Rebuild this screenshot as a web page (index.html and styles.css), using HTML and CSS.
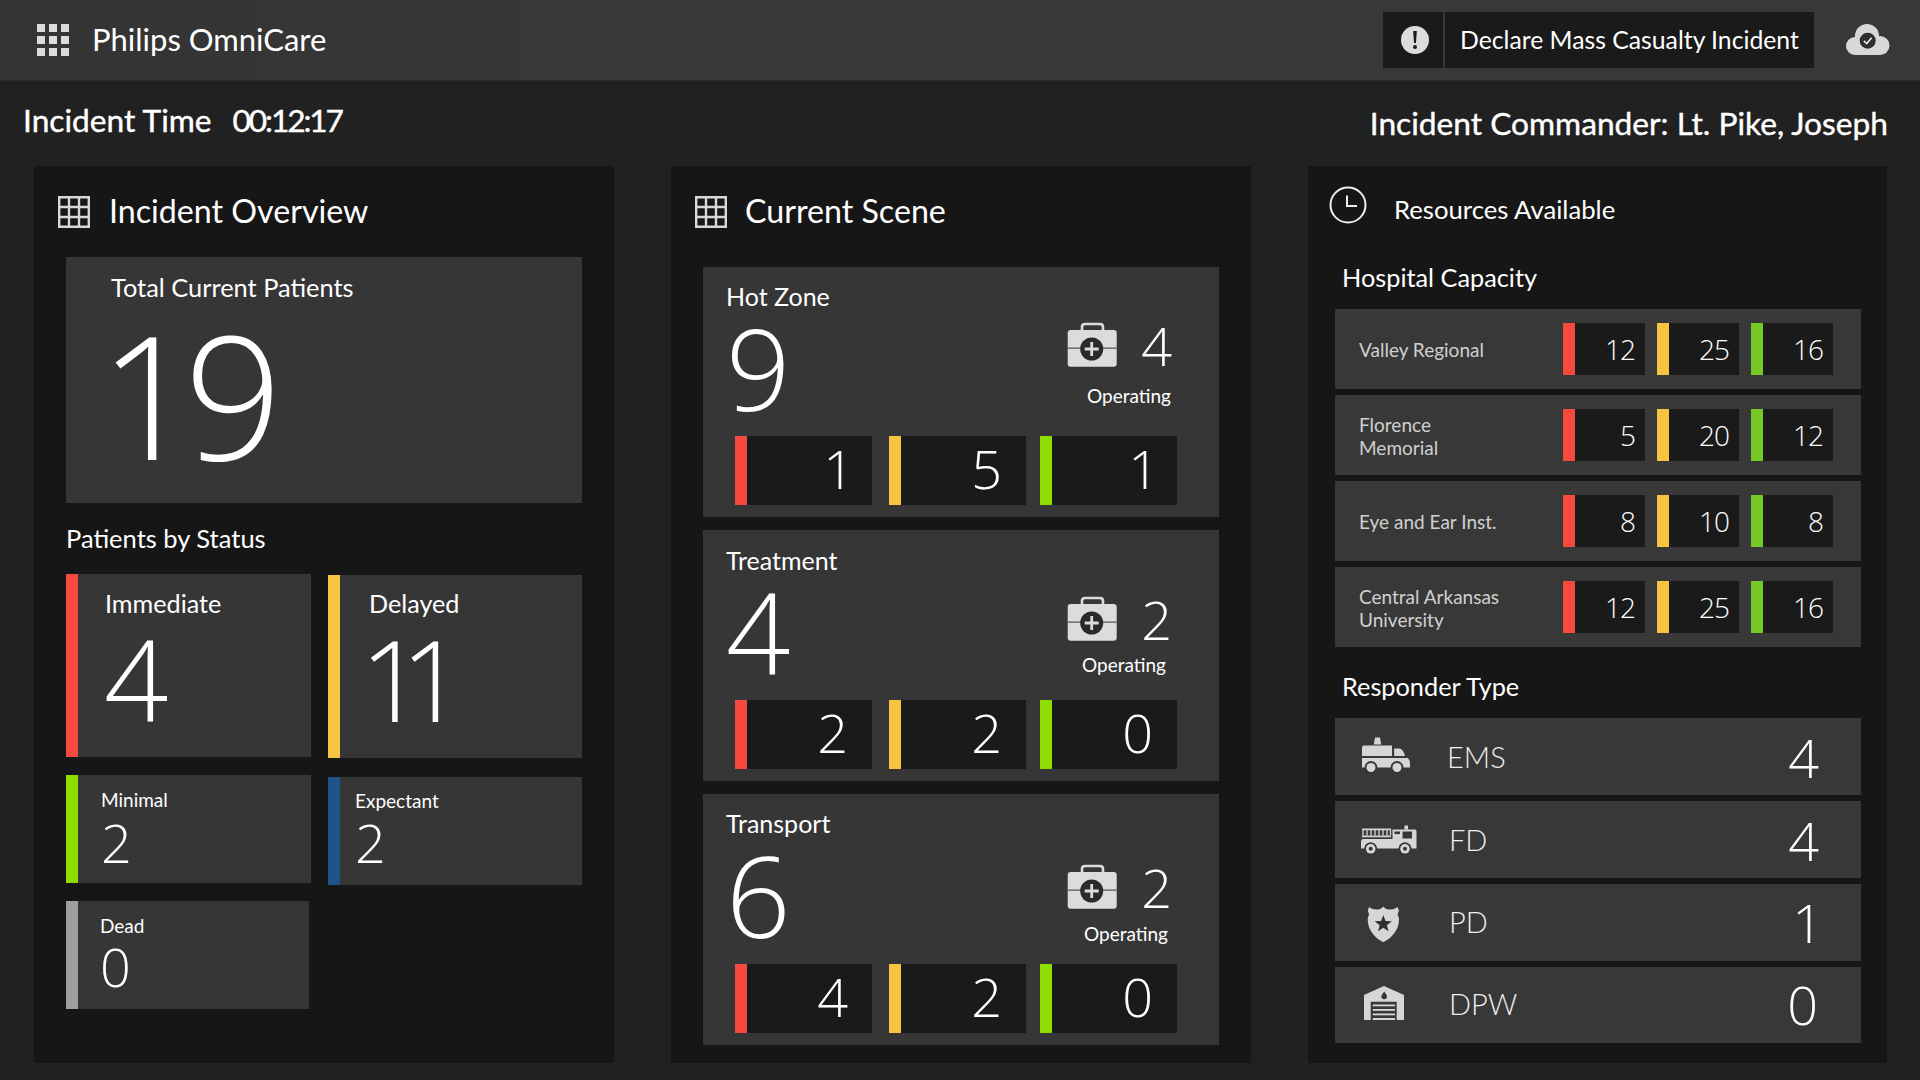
FILE: index.html
```html
<!doctype html>
<html lang='en-US'>
  <head>
    <title>Philips OmniCare</title>
    <meta charset='UTF-8'>
    <link rel="stylesheet" href="styles.css">
  </head>
  <body>
<svg class=defs width=0 height=0>
  <symbol id=i-grid viewBox="0 0 32 32">
    <path d="M1.2 1.2H30.8V30.8H1.2ZM11 1.2V30.8M21 1.2V30.8M1.2 11H30.8M1.2 21H30.8" fill=none stroke=#d8d8d8 stroke-width=2.4 />
  </symbol>
  <symbol id=i-kit viewBox="0 0 65 60">
    <path d="M22 15V12Q22 9 25 9H40Q43 9 43 12V15" fill=none stroke=#dcdcdc stroke-width=2.6 />
    <rect x=7.7 y=15 width=49 height=36.7 rx=3 fill=#dcdcdc />
    <rect x=7.7 y=32.6 width=49 height=1 fill=#363636 />
    <circle cx=31.7 cy=34 r=11.5 fill=#2a2a2a />
    <path d="M31.7 27V41M24.7 34H38.7" stroke=#dcdcdc stroke-width=2.8 />
  </symbol>
</svg>

<header class=topbar>
  <svg class=apps width=32 height=32 viewBox="0 0 32 32" fill=#dcdcdc>
    <rect width=8 height=8 /><rect x=12 width=8 height=8 /><rect x=24 width=8 height=8 />
    <rect y=12 width=8 height=8 /><rect x=12 y=12 width=8 height=8 /><rect x=24 y=12 width=8 height=8 />
    <rect y=24 width=8 height=8 /><rect x=12 y=24 width=8 height=8 /><rect x=24 y=24 width=8 height=8 />
  </svg>
  <div class=brand>Philips OmniCare</div>
  <div class=alert-icon>
    <svg width=28 height=28 viewBox="0 0 28 28">
      <circle cx=14 cy=14 r=14 fill=#dcdcdc />
      <path d="M12.2 5H15.8L15 17H13Z" fill=#1a1a1a />
      <circle cx=14 cy=21 r=2 fill=#1a1a1a />
    </svg>
  </div>
  <div class=declare>Declare Mass Casualty Incident</div>
  <svg class=cloud width=56 height=50 viewBox="0 0 56 50">
    <g fill=#d8d8d8>
      <circle cx=15 cy=31 r=9 /><circle cx=27 cy=21 r=12 /><circle cx=40 cy=30.5 r=9.5 />
      <rect x=15 y=27 width=26 height=13 />
    </g>
    <circle cx=27.7 cy=25.7 r=8 fill=#2e2e2e />
    <path d="M23.8 25.8L26.7 28.6L31.7 22.8" fill=none stroke=#e8e8e8 stroke-width=1.7 />
  </svg>
</header>

<div class=subbar>
  <div class=incident-time>Incident Time<span class=clock-value>00:12:17</span></div>
  <div class=commander>Incident Commander: Lt. Pike, Joseph</div>
</div>

<main class=columns>
  <!-- left column -->
  <section class=panel>
    <div class=panel-head>
      <svg class=head-icon><use href=#i-grid /></svg>
      <h2>Incident Overview</h2>
    </div>
    <div class=panel-body>
      <div class=total-card>
        <div class=total-label>Total Current Patients</div>
        <div class=total-value>19</div>
      </div>
      <h3 class=status-title>Patients by Status</h3>
      <div class=status-cols>
        <div class="status-col col-left">
          <div class="stat stat-big red">
            <div class=stat-label>Immediate</div>
            <div class=stat-value>4</div>
          </div>
          <div class="stat stat-small green">
            <div class=stat-label>Minimal</div>
            <div class=stat-value>2</div>
          </div>
          <div class="stat stat-small gray">
            <div class=stat-label>Dead</div>
            <div class=stat-value>0</div>
          </div>
        </div>
        <div class="status-col col-right">
          <div class="stat stat-big yellow">
            <div class=stat-label>Delayed</div>
            <div class=stat-value>11</div>
          </div>
          <div class="stat stat-small blue">
            <div class=stat-label>Expectant</div>
            <div class=stat-value>2</div>
          </div>
        </div>
      </div>
    </div>
  </section>

  <!-- middle column -->
  <section class=panel>
    <div class="panel-head head-scene">
      <svg class=head-icon><use href=#i-grid /></svg>
      <h2>Current Scene</h2>
    </div>
    <div class="panel-body scene-list">
      <div class="scene scene-hot">
        <div class=scene-title>Hot Zone</div>
        <div class=scene-main>
          <div class=scene-value>9</div>
          <div class=op-block>
            <div class=op-row><svg class=kit><use href=#i-kit /></svg><span class=op-value>4</span></div>
            <div class=op-label>Operating</div>
          </div>
        </div>
        <div class=chips>
          <div class="chip red"><span class=one>1</span></div>
          <div class="chip yellow"><span>5</span></div>
          <div class="chip lime"><span class=one>1</span></div>
        </div>
      </div>
      <div class="scene scene-treat">
        <div class=scene-title>Treatment</div>
        <div class=scene-main>
          <div class=scene-value>4</div>
          <div class=op-block>
            <div class=op-row><svg class=kit><use href=#i-kit /></svg><span class=op-value>2</span></div>
            <div class=op-label>Operating</div>
          </div>
        </div>
        <div class=chips>
          <div class="chip red"><span>2</span></div>
          <div class="chip yellow"><span>2</span></div>
          <div class="chip lime"><span>0</span></div>
        </div>
      </div>
      <div class="scene scene-trans">
        <div class=scene-title>Transport</div>
        <div class=scene-main>
          <div class=scene-value>6</div>
          <div class=op-block>
            <div class=op-row><svg class=kit><use href=#i-kit /></svg><span class=op-value>2</span></div>
            <div class=op-label>Operating</div>
          </div>
        </div>
        <div class=chips>
          <div class="chip red"><span>4</span></div>
          <div class="chip yellow"><span>2</span></div>
          <div class="chip lime"><span>0</span></div>
        </div>
      </div>
    </div>
  </section>

  <!-- right column -->
  <section class="panel panel-res">
    <div class="panel-head head-res">
      <svg class=clock-icon width=38 height=38 viewBox="0 0 38 38">
        <circle cx=19 cy=19 r=17.5 fill=none stroke=#eee stroke-width=2 />
        <path d="M18 9.5V20H28" fill=none stroke=#eee stroke-width=2 />
      </svg>
      <h2>Resources Available</h2>
    </div>
    <div class=panel-body>
      <h3 class=cap-title>Hospital Capacity</h3>
      <div class=rows>
        <div class=hosp-row>
          <div class=hosp-name>Valley Regional</div>
          <div class="mini red"><span>12</span></div><div class="mini yellow"><span>25</span></div><div class="mini leaf"><span>16</span></div>
        </div>
        <div class=hosp-row>
          <div class=hosp-name>Florence<br>Memorial</div>
          <div class="mini red"><span>5</span></div><div class="mini yellow"><span>20</span></div><div class="mini leaf"><span>12</span></div>
        </div>
        <div class=hosp-row>
          <div class=hosp-name>Eye and Ear Inst.</div>
          <div class="mini red"><span>8</span></div><div class="mini yellow"><span>10</span></div><div class="mini leaf"><span>8</span></div>
        </div>
        <div class=hosp-row>
          <div class=hosp-name>Central Arkansas<br>University</div>
          <div class="mini red"><span>12</span></div><div class="mini yellow"><span>25</span></div><div class="mini leaf"><span>16</span></div>
        </div>
      </div>
      <h3 class=resp-title>Responder Type</h3>
      <div class=rows>
        <div class=resp-row>
          <svg class=resp-icon viewBox="0 1.5 70 50" fill=#d6d6d6>
            <path d="M20 7H25L26.2 14H18.8Z" />
            <path d="M7 17Q7 15 9 15H37V25.5H7Z" />
            <path d="M39.2 18H44Q48 18 50 25.5H39.2Z" />
            <path d="M7 27.5H52.5Q55 29 55 33V37H7Z" />
            <circle cx=16 cy=37 r=6.5 fill=#363636 /><circle cx=16 cy=37 r=4.5 />
            <circle cx=42 cy=37 r=6.5 fill=#363636 /><circle cx=42 cy=37 r=4.5 />
          </svg>
          <div class=resp-name>EMS</div>
          <div class=resp-value>4</div>
        </div>
        <div class=resp-row>
          <svg class=resp-icon viewBox="0 -0.5 70 50" fill=#d6d6d6>
            <path d="M7 13H36V14.8H7ZM7 20H36V21.8H7Z" />
            <path d="M8 14V20M12 14V20M16 14V20M20 14V20M24 14V20M28 14V20M32 14V20M35.5 14V20" stroke=#d6d6d6 stroke-width=1.3 />
            <rect x=49.5 y=10 width=3.5 height=4 />
            <path d="M37.5 14H60Q61.5 14 61.5 16V33H6V27Q6 23.5 8 23.5H37.5Z" />
            <rect x=47.5 y=16 width=9.5 height=7 fill=#363636 />
            <rect x=39.5 y=16 width=5.5 height=2.6 fill=#363636 />
            <circle cx=15.7 cy=33.3 r=6.5 fill=#363636 /><circle cx=15.7 cy=33.3 r=4.8 /><circle cx=15.7 cy=33.3 r=2 fill=#363636 />
            <circle cx=50 cy=33.3 r=6.5 fill=#363636 /><circle cx=50 cy=33.3 r=4.8 /><circle cx=50 cy=33.3 r=2 fill=#363636 />
          </svg>
          <div class=resp-name>FD</div>
          <div class=resp-value>4</div>
        </div>
        <div class=resp-row>
          <svg class=resp-icon viewBox="0 -2.5 70 50" fill=#d6d6d6>
            <path d="M14 6.5L15.5 7.5Q20 10 25 8.5Q27 7.8 28.3 6Q29.6 7.8 31.6 8.5Q36.6 10 41 7.5L42.6 6.5L44 10.5Q42.6 12.5 42.6 14.5Q44 16 44 19C44 30 36 38 28.3 41.7C20.6 38 12.7 30 12.7 19Q12.7 16 14 14.5Q14 12.5 12.7 10.5Z" />
            <polygon points="28.3,14.5 30.5,20.4 36.9,20.7 31.9,24.7 33.6,30.8 28.3,27.3 23,30.8 24.7,24.7 19.7,20.7 26.1,20.4" fill=#2e2e2e />
          </svg>
          <div class=resp-name>PD</div>
          <div class=resp-value>1</div>
        </div>
        <div class=resp-row>
          <svg class=resp-icon viewBox="0 0 70 50" fill=#d6d6d6>
            <path d="M9 15L29 6L49 15V40H41.7V21.7H15.7V40H9Z" />
            <rect x=17.7 y=24.5 width=22.3 height=1.8 /><rect x=17.7 y=29 width=22.3 height=1.8 /><rect x=17.7 y=33.5 width=22.3 height=1.8 /><rect x=17.7 y=38 width=22.3 height=2 />
            <path d="M29.2 11.5Q32 15 32 16.5A2.8 2.8 0 0 1 26.4 16.5Q26.4 15 29.2 11.5Z" fill=#363636 />
          </svg>
          <div class=resp-name>DPW</div>
          <div class=resp-value>0</div>
        </div>
      </div>
    </div>
  </section>
</main>
  </body>
</html>
```

FILE: styles.css
```css
html, body {
  margin: 0;
  background: #212121;
  color: #fff;
  font-family: Lato, "Open Sans", sans-serif;
}
body {
  width: 1920px;
  height: 1080px;
  overflow: hidden;
}
h2, h3 {
  margin: 0;
  font-weight: 400;
}
.defs {
  display: block;
  height: 0;
}
/* all the big numbers */
.total-value, .stat-value, .scene-value, .op-value, .chip, .mini, .resp-value {
  font-family: "Open Sans", sans-serif;
  font-weight: 300;
}

/* top bar */
.topbar {
  height: 80px;
  display: flex;
  align-items: center;
  padding-left: 37px;
  background: linear-gradient(90deg, #333, #3a3a3a 40%, #383838);
  border-bottom: 1px solid #2a2a2a;
}
.brand {
  margin: -2px auto 0 23px;
  font-size: 31px;
}
.alert-icon {
  width: 60px;
  height: 56px;
  display: flex;
  align-items: center;
  justify-content: center;
  box-sizing: border-box;
  padding-left: 4px;
  background: #1a1a1a;
}
.declare {
  width: 354px;
  height: 56px;
  margin-left: 2px;
  padding-left: 15px;
  line-height: 56px;
  font-size: 24.75px;
  background: #1a1a1a;
}
.cloud {
  margin-left: 26px;
  margin-right: 24px;
}

/* incident strip */
.subbar {
  height: 85px;
  display: flex;
  justify-content: space-between;
  padding: 0 32px 0 23px;
}
.incident-time, .commander {
  font-size: 31.7px;
  -webkit-text-stroke: 0.4px #fff;
}
.incident-time {
  margin-top: 20px;
}
.clock-value {
  margin-left: 21px;
  letter-spacing: -2.1px;
}
.commander {
  margin-top: 23px;
}

/* panels */
.columns {
  display: flex;
  gap: 57px;
  padding-left: 34px;
}
.panel {
  width: 580px;
  height: 897px;
  background: #161616;
}
.panel-res {
  width: 579px;
}
.panel-head {
  height: 91px;
  display: flex;
  align-items: center;
  padding-left: 24px;
}
.panel-head h2 {
  margin: -2px 0 0 19px;
  font-size: 32.2px;
}
.head-icon {
  width: 32px;
  height: 32px;
}
.panel-body {
  padding: 0 32px;
}

/* overview */
.total-card {
  height: 246px;
  padding: 15px 0 0 45px;
  box-sizing: border-box;
  background: #363636;
}
.total-label {
  font-size: 25.4px;
  line-height: 30px;
}
.total-value {
  margin: 5px 0 0 -12px;
  font-size: 172px;
  line-height: 1;
  letter-spacing: -13px;
}
.status-title {
  font-size: 25.5px;
  line-height: 71px;
}
.status-cols {
  display: flex;
  gap: 17px;
}
.status-col {
  display: flex;
  flex-direction: column;
  gap: 18px;
}
.col-left {
  width: 245px;
}
.col-right {
  width: 254px;
  margin-top: 1px;
  gap: 19px;
}
.stat {
  box-sizing: border-box;
  border-left: 12px solid;
  background: #363636;
}
.stat-big {
  height: 183px;
  padding: 14px 0 0 27px;
}
.stat-big .stat-label {
  font-size: 25.2px;
  line-height: 30px;
}
.stat-big .stat-value {
  margin: 4px 0 0 -1px;
  font-size: 113px;
  line-height: 1;
}
.stat-small {
  height: 108px;
  padding: 13px 0 0 23px;
}
.stat-small .stat-label {
  font-size: 19px;
  line-height: 24px;
}
.stat-small .stat-value {
  margin-top: 3px;
  font-size: 54px;
  line-height: 1;
}
.col-left .gray {
  width: 243px;
}
.col-left .gray .stat-label {
  margin-left: -1px;
}
.col-left .gray .stat-value {
  margin: 1px 0 0 -1px;
}
.col-right .stat-big {
  padding: 13px 0 0 29px;
}
.col-right .stat-big .stat-value {
  margin: 4px 0 0 -9px;
  letter-spacing: -24px;
}
.col-right .stat-small {
  padding: 12px 0 0 15px;
}
.col-right .stat-small .stat-value {
  margin-top: 2px;
}
.stat.red { border-color: #f44a3f; }
.stat.yellow { border-color: #f5c542; }
.stat.green { border-color: #8fdc00; }
.stat.blue { border-color: #1e5488; }
.stat.gray { border-color: #9e9e9e; }

/* scene */
.head-scene {
  margin-bottom: 10px;
}
.head-scene h2 {
  margin-left: 18px;
}
.scene-list {
  display: flex;
  flex-direction: column;
  gap: 13px;
}
.scene {
  height: 251px;
  box-sizing: border-box;
  padding-top: 15px;
  background: #363636;
}
.scene-hot {
  height: 250px;
}
.scene-treat {
  padding-top: 16px;
}
.scene-title {
  padding-left: 23px;
  font-size: 25px;
  line-height: 28px;
}
.scene-main {
  height: 127px;
  display: flex;
  justify-content: space-between;
  padding: 0 47px 0 23px;
}
.scene-hot .scene-main,
.scene-treat .scene-main {
  height: 126px;
}
.scene-value {
  margin-top: 1px;
  font-size: 113px;
  line-height: 1;
}
.op-block {
  display: flex;
  flex-direction: column;
  align-items: flex-end;
  padding-top: 5px;
}
.op-row {
  display: flex;
  align-items: center;
  gap: 16px;
}
.kit {
  width: 65px;
  height: 60px;
}
.op-value {
  font-size: 54px;
  line-height: 60px;
}
.op-label {
  margin-top: 10px;
  margin-right: 1px;
  font-size: 19px;
  line-height: 22px;
}
.scene-treat .op-block { padding-top: 15px; }
.scene-treat .op-label { margin-top: 5px; margin-right: 6px; }
.scene-trans .op-block { padding-top: 20px; }
.scene-trans .op-label { margin-top: 6px; margin-right: 4px; }
.chips {
  display: flex;
  gap: 14px;
  padding-left: 32px;
}
.chip {
  width: 137px;
  height: 69px;
  box-sizing: border-box;
  display: flex;
  align-items: center;
  justify-content: flex-end;
  padding: 0 24px 6px 0;
  border-left: 12px solid;
  background: #1a1a1a;
  font-size: 54px;
}
.chip .one { margin-right: -6px; }
.chip.red { border-color: #f44a3f; }
.chip.yellow { border-color: #f5c542; margin-left: 3px; }
.chip.lime { border-color: #8fdc00; }

/* resources */
.head-res {
  height: 88px;
  padding-left: 21px;
}
.head-res h2 {
  margin-left: 27px;
  font-size: 25.7px;
}
.clock-icon {
  margin-bottom: 10px;
}
.panel-res .panel-body {
  padding: 0 26px 0 27px;
}
.cap-title,
.resp-title {
  padding-left: 7px;
  font-size: 25.3px;
}
.cap-title {
  line-height: 46px;
  margin-bottom: 9px;
}
.resp-title {
  line-height: 64px;
  padding-top: 7px;
}
.rows {
  display: flex;
  flex-direction: column;
  gap: 6px;
}
.hosp-row {
  height: 80px;
  display: flex;
  align-items: center;
  gap: 12px;
  padding-left: 24px;
  background: #383838;
}
.hosp-name {
  width: 192px;
  margin-top: 1px;
  font-size: 19px;
  line-height: 23px;
  color: #d0d0d0;
}
.mini {
  width: 82px;
  height: 52px;
  box-sizing: border-box;
  display: flex;
  align-items: center;
  justify-content: flex-end;
  padding-right: 10px;
  border-left: 12px solid;
  background: #1a1a1a;
  font-size: 28px;
  letter-spacing: -1px;
}
.mini.red { border-color: #f44a3f; }
.mini.yellow { border-color: #f5c542; }
.mini.leaf { border-color: #76c827; }
.resp-row {
  height: 77px;
  display: flex;
  align-items: center;
  padding-left: 20px;
  background: #383838;
}
.resp-row:last-child {
  height: 76px;
}
.resp-icon {
  width: 70px;
  height: 50px;
  flex: none;
}
.resp-name {
  margin-left: 24px;
  font-size: 29px;
  font-weight: 300;
  color: #eee;
}
.resp-value {
  margin-left: auto;
  margin-right: 42px;
  font-size: 54px;
}
.resp-row:first-child .resp-name {
  margin-left: 22px;
}
.resp-row:nth-child(3) .resp-name {
  margin-top: -2px;
}
.resp-row:nth-child(3) .resp-value {
  margin: -2px 38px 0 auto;
}
.resp-row:last-child .resp-name {
  margin-top: -3px;
}
.resp-row:last-child .resp-value {
  margin: -3px 43px 0 auto;
}
```
